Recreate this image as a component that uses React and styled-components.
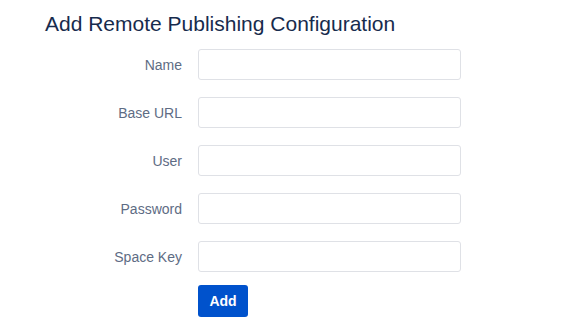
import styled, { createGlobalStyle } from "styled-components";

const GlobalStyle = createGlobalStyle`
  body {
    margin: 0;
    background: #fff;
    font-family: "Liberation Sans", Arial, sans-serif;
  }
`;

const fields = ["Name", "Base URL", "User", "Password", "Space Key"];

export default function App() {
  return (
    <>
      <GlobalStyle />
      <Page>
        <Title>Add Remote Publishing Configuration</Title>
        <Form onSubmit={(e) => e.preventDefault()}>
          {fields.map((f) => (
            <Row key={f}>
              <Label htmlFor={f}>{f}</Label>
              <Input id={f} type={f === "Password" ? "password" : "text"} />
            </Row>
          ))}
          <Row $actions>
            <span />
            <Button type="submit">Add</Button>
          </Row>
        </Form>
      </Page>
    </>
  );
}

const Page = styled.div`
  padding: 11px 0 0 45px;
`;

const Title = styled.h2`
  margin: 0;
  font-size: 21px;
  font-weight: 400;
  line-height: 25px;
  color: #172b4d;
`;

const Form = styled.form`
  margin-top: 13px;
  display: flex;
  flex-direction: column;
  gap: 17px;
`;

const Row = styled.div`
  display: grid;
  grid-template-columns: 137px 263px;
  column-gap: 16px;
  align-items: center;
  margin-top: ${(p) => (p.$actions ? "-4px" : "0")};
`;

const Label = styled.label`
  text-align: right;
  font-size: 14px;
  color: #5e6c84;
`;

const Input = styled.input`
  box-sizing: border-box;
  height: 31px;
  width: 100%;
  border: 1px solid #dfe1e6;
  border-radius: 3px;
  background: #fff;
  font-size: 14px;
  padding: 0 8px;
  outline: none;
`;

const Button = styled.button`
  justify-self: start;
  height: 32px;
  width: 50px;
  border: none;
  border-radius: 3px;
  background: #0052cc;
  color: #fff;
  font-family: inherit;
  font-size: 14px;
  font-weight: 700;
  cursor: pointer;
`;
